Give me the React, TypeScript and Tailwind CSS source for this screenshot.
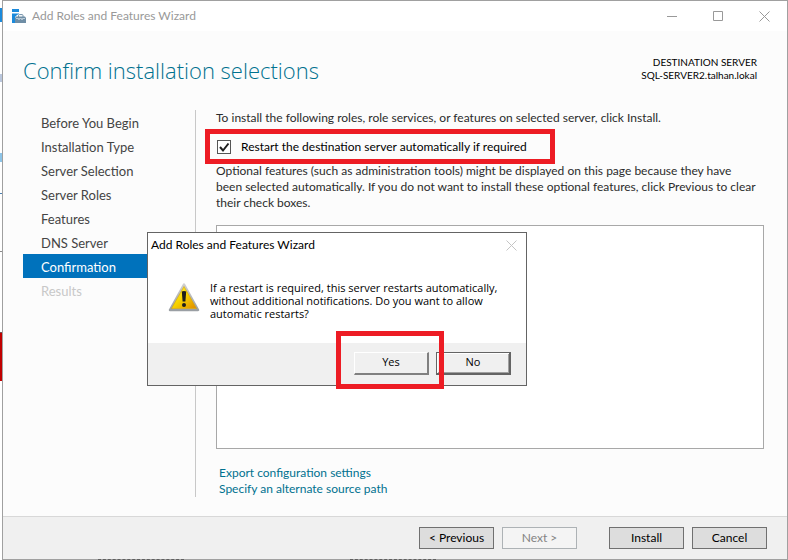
import { useState } from 'react'

const STEPS = [
  'Before You Begin',
  'Installation Type',
  'Server Selection',
  'Server Roles',
  'Features',
  'DNS Server',
  'Confirmation',
  'Results',
]

const CURRENT = 'Confirmation'

// Slivers of the desktop that show beside the window
const EDGE = [
  { height: 'h-2', color: 'bg-white' },
  { height: 'h-[14px]', color: 'bg-[#1c8adb]' },
  { height: 'h-[52px]', color: 'bg-white' },
  { height: 'h-2', color: 'bg-[#b9c6dc]' },
  { height: 'h-[71px]', color: 'bg-white' },
  { height: 'h-[9px]', color: 'bg-[#8cc4e8]' },
  { height: 'h-[31px]', color: 'bg-white' },
  { height: 'h-px', color: 'bg-[#4a7fb0]' },
  { height: 'h-[57px]', color: 'bg-white' },
  { height: 'h-px', color: 'bg-[#8a8a8a]' },
  { height: 'h-20', color: 'bg-white' },
  { height: 'h-px', color: 'bg-[#7a5050]' },
  { height: 'h-12', color: 'bg-[#c00000]' },
]

function ServerIcon() {
  return (
    <svg width="15" height="14" viewBox="0 0 15 14" aria-hidden="true">
      <path d="M0 0h7v3H0zM0 4.500h7V5L5 6 3 8v6H0z" fill="#1c8adb" />
      <path d="M6.500 8V6.500q0-.9.9-.9h2.700q.9 0 .9.900V8" fill="none" stroke="#6f8ea6" />
      <path d="M3 9l1-1.500h9L14 9v5H3z" fill="#6f8ea6" />
      <path d="M4 9.500h2.500v1h1v-1h2v1h1v-1H13" fill="none" stroke="#dfe8ef" strokeWidth=".7" />
    </svg>
  )
}

function CloseIcon() {
  return (
    <svg className="block" width="11" height="11" viewBox="0 0 11 11" fill="none" stroke="currentColor" aria-hidden="true">
      <path d="M.5.5l10 10M10.500.5l-10 10" />
    </svg>
  )
}

function WarningIcon() {
  return (
    <svg width="32" height="32" viewBox="0 0 32 32" className="shrink-0" aria-hidden="true">
      <defs>
        <linearGradient id="warn" x1="0" y1="0" x2="1" y2="1">
          <stop offset="0" stopColor="#fff36a" />
          <stop offset=".45" stopColor="#f8d800" />
          <stop offset="1" stopColor="#e08a00" />
        </linearGradient>
        <linearGradient id="rim" x1="0" y1="0" x2="0" y2="1">
          <stop offset="0" stopColor="#d0d0d0" />
          <stop offset="1" stopColor="#9a9fa4" />
        </linearGradient>
      </defs>
      <path d="M16 3.500L30 29H2z" fill="#cfcfcf" stroke="url(#rim)" strokeWidth="2.500" strokeLinejoin="round" />
      <path d="M16 5.500L28.500 27.500h-25z" fill="url(#warn)" stroke="#d8a400" strokeWidth=".6" strokeLinejoin="round" />
      <path d="M13.800 10.500q2.200-1.200 4.400 0L17.400 20.500h-2.800z" fill="#1d1d1d" />
      <circle cx="16" cy="24" r="2" fill="#1d1d1d" />
    </svg>
  )
}

const FOOTER_BUTTON = 'h-[22px] w-[75px] border border-[#707070] bg-[#dddddd] leading-5 text-black'

function ConfirmDialog() {
  return (
    <div
      role="dialog"
      aria-labelledby="dialog-title"
      className="absolute left-[147px] top-[232px] w-[380px] border border-[#646464] bg-white text-black"
    >
      <div className="flex h-6 items-center justify-between pl-[3px] pr-[9px]">
        <h2 id="dialog-title">Add Roles and Features Wizard</h2>
        <button aria-label="Close dialog" className="text-[#c4c4c4]">
          <CloseIcon />
        </button>
      </div>
      <div className="flex h-[86px] items-start gap-[10px] px-5 pt-6">
        <WarningIcon />
        <p className="whitespace-nowrap font-['Open_Sans','Noto_Sans',sans-serif] text-[11px] leading-[13px]">
          If a restart is required, this server restarts automatically,
          <br />
          without additional notifications. Do you want to allow
          <br />
          automatic restarts?
        </p>
      </div>
      <div className="flex h-[42px] items-center justify-end gap-[7px] bg-[#f0f0f0] px-[15px] pb-[2px] font-['Open_Sans','Noto_Sans',sans-serif] text-[11px]">
        <button className="h-[23px] w-[75px] border-b-2 border-l border-r-2 border-t border-b-[#808080] border-l-white border-r-[#808080] border-t-white bg-[#f0f0f0]">
          Yes
        </button>
        <button className="h-[23px] w-[75px] border-b-2 border-l border-r-2 border-t border-[#646464] bg-[#f0f0f0] shadow-[inset_1px_1px_0_#ffffff,inset_-1px_-1px_0_#a0a0a0]">
          No
        </button>
      </div>
      {/* Highlight around Yes */}
      <div className="pointer-events-none absolute left-[188px] top-[98px] h-[58px] w-[108px] border-5 border-[#ed1c24]" />
    </div>
  )
}

export default function App() {
  const [restart, setRestart] = useState(true)

  return (
    <div className="relative flex min-h-screen bg-white font-[Lato,'Open_Sans',sans-serif] text-xs text-[#2b2b2b]">
      <div className="w-[2px] shrink-0">
        {EDGE.map((part, i) => (
          <div key={i} className={`${part.height} ${part.color}`} />
        ))}
      </div>

      <div className="flex min-w-0 flex-1 flex-col border border-[#a0a0a0] bg-[#fcfcfc]">
        {/* Title bar */}
        <div className="flex h-[30px] items-center bg-white pl-[9px] pr-[17px] text-[#999999]">
          <ServerIcon />
          <span className="ml-[5px]">Add Roles and Features Wizard</span>
          <div className="ml-auto flex items-center gap-9">
            <button aria-label="Minimize">
              <svg className="block" width="10" height="10" stroke="currentColor" aria-hidden="true">
                <path d="M0 5.500h10" />
              </svg>
            </button>
            <button aria-label="Maximize">
              <svg className="block" width="10" height="10" fill="none" stroke="currentColor" aria-hidden="true">
                <path d="M.5.5h9v9h-9z" />
              </svg>
            </button>
            <button aria-label="Close">
              <CloseIcon />
            </button>
          </div>
        </div>

        {/* Heading */}
        <header className="flex h-[79px] items-center justify-between pl-5 pr-[30px]">
          <h1 className="font-['Open_Sans','Noto_Sans',sans-serif] text-[22px] font-light text-[#00718f]">
            Confirm installation selections
          </h1>
          <div className="pb-1 text-right text-[10px] leading-[13px] text-black">
            <p>DESTINATION SERVER</p>
            <p>SQL-SERVER2.talhan.lokal</p>
          </div>
        </header>

        <div className="flex flex-1 pb-[19px] pl-5 pr-[23px]">
          <nav className="w-[173px] shrink-0 border-r border-[#c8c8c8]">
            {STEPS.map((step) => (
              <a
                key={step}
                href="#"
                className={`block h-6 pl-[18px] text-[13px] leading-[26px] ${
                  step === CURRENT ? 'bg-[#0072bc] text-white' : step === 'Results' ? 'text-[#c8c8c8]' : 'text-[#444444]'
                }`}
              >
                {step}
              </a>
            ))}
          </nav>

          <main className="flex min-w-0 flex-1 flex-col pl-5">
            <p className="leading-4">
              To install the following roles, role services, or features on selected server, click Install.
            </p>
            <div className="relative mt-[5px] flex h-8 items-center">
              <input
                id="restart"
                type="checkbox"
                checked={restart}
                onChange={(e) => setRestart(e.target.checked)}
                className="peer ml-px size-[14px] appearance-none border border-[#555555] bg-white"
              />
              <svg
                className="pointer-events-none absolute left-px hidden peer-checked:block"
                width="14"
                height="14"
                fill="none"
                stroke="#1e1e1e"
                strokeWidth="2"
                aria-hidden="true"
              >
                <path d="M3 7l3 3.500L11.500 3.500" />
              </svg>
              <label htmlFor="restart" className="ml-[10px] text-black">
                Restart the destination server automatically if required
              </label>
              {/* Highlight around the restart option */}
              <div className="pointer-events-none absolute -left-[11px] -top-[2px] h-[35px] w-[350px] border-5 border-[#ed1c24]" />
            </div>
            <p className="pr-2 leading-4">
              Optional features (such as administration tools) might be displayed on this page because they have been
              selected automatically. If you do not want to install these optional features, click Previous to clear
              their check boxes.
            </p>
            <div className="mt-[14px] flex-1 border border-[#a8a8a8] bg-white" />
            <div className="flex flex-col items-start pl-[3px] pt-4 leading-4 text-[#00718f]">
              <a href="#">Export configuration settings</a>
              <a href="#">Specify an alternate source path</a>
            </div>
          </main>
        </div>

        <footer className="flex h-[43px] items-center justify-end gap-2 border-t border-[#d8d8d8] bg-[#f0f0f0] pr-5">
          <button className={FOOTER_BUTTON}>&lt; Previous</button>
          <button disabled className="h-[22px] w-[75px] border border-[#adb2b5] bg-[#f4f4f4] leading-5 text-[#838383]">
            Next &gt;
          </button>
          <button className={`${FOOTER_BUTTON} ml-6`}>Install</button>
          <button className={FOOTER_BUTTON}>Cancel</button>
        </footer>
      </div>

      {/* Desktop text peeking out under the window */}
      <div className="absolute bottom-0 left-[98px] w-[86px] border-b border-dashed border-[#606060]" />
      <div className="absolute bottom-0 left-[350px] w-[86px] border-b border-dashed border-[#606060]" />

      <ConfirmDialog />
    </div>
  )
}
